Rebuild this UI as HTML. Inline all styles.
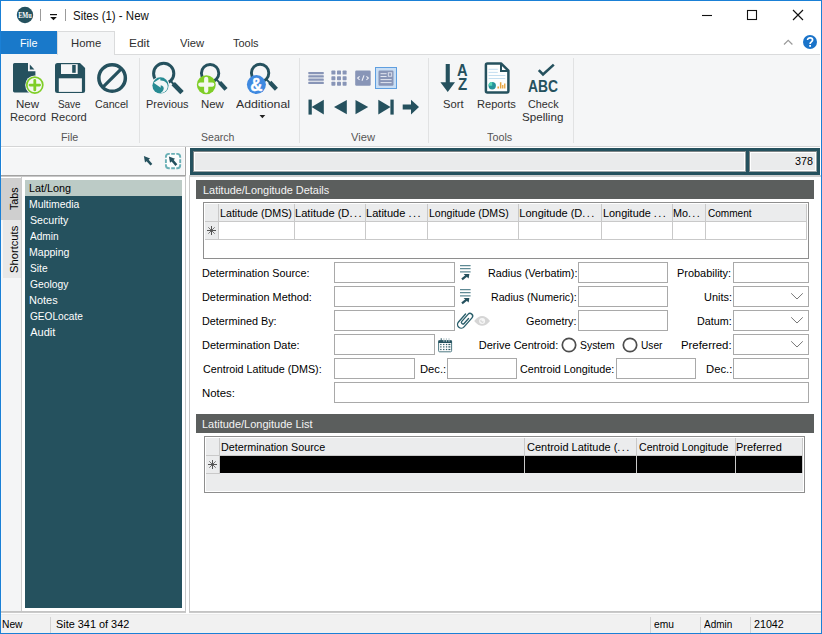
<!DOCTYPE html>
<html><head><meta charset="utf-8"><title>Sites (1) - New</title>
<style>
html,body{margin:0;padding:0;}
body{width:822px;height:634px;overflow:hidden;background:#fff;font-family:"Liberation Sans", sans-serif;position:relative;}
#w{position:absolute;left:0;top:0;width:822px;height:634px;overflow:hidden;background:#fff;}
#w div,#w svg{position:absolute;box-sizing:border-box;}
#w span.t{position:absolute;white-space:nowrap;transform-origin:0 0;display:block;}
</style></head><body><div id="w">
<div style="left:0px;top:0px;width:822px;height:31px;background:#fff;"></div>
<svg style="left:15px;top:5px" width="20" height="20" viewBox="0 0 20 20">
<circle cx="10" cy="10" r="8.2" fill="#25515e"/>
<text x="10" y="12.7" font-family='"Liberation Serif", serif' font-size="7.6" font-weight="bold" fill="#fff" text-anchor="middle" textLength="13.6" lengthAdjust="spacingAndGlyphs">EMu</text>
</svg>
<div style="left:40px;top:9px;width:1px;height:12px;background:#9b9b9b;"></div>
<div style="left:65px;top:9px;width:1px;height:12px;background:#9b9b9b;"></div>
<svg style="left:49px;top:12px" width="10" height="10" viewBox="0 0 10 10">
<rect x="1" y="2" width="7" height="1.2" fill="#111"/>
<path d="M1.2 5 L7.8 5 L4.5 8.3 Z" fill="#111"/></svg>
<svg style="left:695px;top:5px" width="120" height="22" viewBox="0 0 120 22">
<path d="M7 10.5 H17" stroke="#111" stroke-width="1.1" fill="none"/>
<rect x="52.5" y="5.5" width="9" height="9" stroke="#111" stroke-width="1.1" fill="none"/>
<path d="M98 5 L108 15 M108 5 L98 15" stroke="#111" stroke-width="1.15" fill="none"/>
</svg>
<svg style="left:780px;top:33px" width="40" height="20" viewBox="0 0 40 20">
<path d="M4 11.5 L8.2 7.3 L12.4 11.5" stroke="#9a9a9a" stroke-width="1.2" fill="none"/>
<circle cx="30" cy="9" r="7" fill="#1a73c9"/>
<path d="M27.6 6.9 C27.6 4.2 32.6 4.2 32.6 7 C32.6 8.8 30.1 8.9 30.1 10.9" stroke="#fff" stroke-width="1.7" fill="none"/>
<rect x="29.2" y="12" width="1.8" height="1.8" fill="#fff"/>
</svg>
<div style="left:1px;top:54px;width:57px;height:1px;background:#f5f6f7;"></div>
<div style="left:1px;top:31px;width:56px;height:23px;background:#1979ca;"></div>
<div style="left:57px;top:31px;width:58px;height:24px;background:#f5f6f7;border:1px solid #dadbdc;border-bottom:none;"></div>
<div style="left:115px;top:54px;width:705px;height:1px;background:#dadbdc;"></div>
<div style="left:1px;top:55px;width:819px;height:91px;background:#f5f6f7;"></div>
<div style="left:1px;top:146px;width:819px;height:1px;background:#d4d5d6;"></div>
<div style="left:139px;top:58px;width:1px;height:85px;background:#e1e2e3;"></div>
<div style="left:299px;top:58px;width:1px;height:85px;background:#e1e2e3;"></div>
<div style="left:428px;top:58px;width:1px;height:85px;background:#e1e2e3;"></div>
<div style="left:573px;top:58px;width:1px;height:85px;background:#e1e2e3;"></div>
<svg style="left:0;top:0" width="822" height="130" viewBox="0 0 822 130"><path d="M14.5 63 H28 V71.2 H35.4 V91 Q35.4 92.4 34 92.4 H14.5 Q13 92.4 13 91 V64.5 Q13 63 14.5 63 Z" fill="#25515e"/><path d="M29.8 64.6 L34.4 69.6 H29.8 Z" fill="#25515e"/><circle cx="34.8" cy="85.1" r="9.6" fill="#f5f6f7"/><circle cx="34.8" cy="85.1" r="8" fill="#f4f8f0" stroke="#7fce27" stroke-width="1.7"/><path d="M30 85.1 H39.6 M34.8 80.3 V89.9" stroke="#7fce27" stroke-width="2.8" stroke-linecap="round" fill="none"/><path d="M57.5 63 H80 L85.1 68 V90.4 Q85.1 92.9 82.6 92.9 H57.5 Q55 92.9 55 90.4 V65.5 Q55 63 57.5 63 Z" fill="#25515e"/><rect x="61" y="64.2" width="16.7" height="9.8" fill="#f5f6f7"/><rect x="72.2" y="65" width="3.5" height="7.8" fill="#25515e"/><rect x="58.8" y="78.3" width="23.1" height="13.6" fill="#f5f6f7"/><circle cx="112.1" cy="78" r="13.25" fill="none" stroke="#25515e" stroke-width="3.5"/><path d="M103.2 86.9 L121 69.1" stroke="#25515e" stroke-width="3.2" fill="none"/><circle cx="163.7" cy="73.4" r="10.1" fill="none" stroke="#25515e" stroke-width="3"/><path d="M170.5 80.6 L174 84.6" stroke="#25515e" stroke-width="2.2" fill="none"/><path d="M173.2 83.6 L182 92.6" stroke="#25515e" stroke-width="4.8" fill="none"/><circle cx="160.5" cy="85.4" r="9" fill="#f5f6f7"/><circle cx="160.5" cy="85.4" r="8.1" fill="#278b93"/><path d="M153.6 82.7 L160.2 78.5 L160.4 80.5 C165 80.2 167.9 83.4 167.7 86.7 C167.5 90 164.8 92.8 160.4 93.3 C163.3 91.5 164.5 88.7 163.3 86.8 C162.5 85.6 161.5 85.3 160.6 85.4 L160.8 87.8 Z" fill="#f1f7f7"/><circle cx="210.1" cy="73.2" r="8.7" fill="none" stroke="#25515e" stroke-width="2.9"/><path d="M216.6 79.6 L220.2 83.4" stroke="#25515e" stroke-width="2" fill="none"/><path d="M219.6 82.4 L226 89.4" stroke="#25515e" stroke-width="4.2" fill="none"/><circle cx="206.3" cy="84.7" r="9.45" fill="#7fce27"/><path d="M200.3 84.6 H212.3 M206.2 78.8 V90.8" stroke="#f4f8f0" stroke-width="4.2" stroke-linecap="round" fill="none"/><circle cx="260.1" cy="73" r="8.7" fill="none" stroke="#25515e" stroke-width="2.9"/><path d="M266.4 79.4 L270.4 83.4" stroke="#25515e" stroke-width="2" fill="none"/><path d="M269.8 82.2 L276.4 89.2" stroke="#25515e" stroke-width="4.2" fill="none"/><circle cx="256.4" cy="84.6" r="9.5" fill="#3f89e0"/><text x="256.3" y="90.6" font-family='"Liberation Sans", sans-serif' font-size="18" font-weight="bold" fill="#fff" stroke="#fff" stroke-width="0.4" text-anchor="middle" textLength="12.2" lengthAdjust="spacingAndGlyphs">&amp;</text><path d="M259.5 115 H265.3 L262.4 118.2 Z" fill="#222"/><rect x="308.3" y="71.9" width="15.5" height="2.3" rx="0.6" fill="#8895b7"/><rect x="308.3" y="75.2" width="15.5" height="2.3" rx="0.6" fill="#8895b7"/><rect x="308.3" y="78.5" width="15.5" height="2.3" rx="0.6" fill="#8895b7"/><rect x="308.3" y="81.8" width="15.5" height="2.3" rx="0.6" fill="#8895b7"/><rect x="331.4" y="70.6" width="4" height="4" rx="0.7" fill="#8895b7"/><rect x="337.0" y="70.6" width="4" height="4" rx="0.7" fill="#8895b7"/><rect x="342.6" y="70.6" width="4" height="4" rx="0.7" fill="#8895b7"/><rect x="331.4" y="76.2" width="4" height="4" rx="0.7" fill="#8895b7"/><rect x="337.0" y="76.2" width="4" height="4" rx="0.7" fill="#8895b7"/><rect x="342.6" y="76.2" width="4" height="4" rx="0.7" fill="#8895b7"/><rect x="331.4" y="81.8" width="4" height="4" rx="0.7" fill="#8895b7"/><rect x="337.0" y="81.8" width="4" height="4" rx="0.7" fill="#8895b7"/><rect x="342.6" y="81.8" width="4" height="4" rx="0.7" fill="#8895b7"/><rect x="355.2" y="70.5" width="15.5" height="15.2" rx="1.2" fill="#8895b7"/><path d="M359.6 76.3 L357.6 78.1 L359.6 79.9 M366.4 76.3 L368.4 78.1 L366.4 79.9 M364 75.4 L362 80.8" stroke="#eef0f6" stroke-width="1.1" fill="none"/><rect x="375.5" y="67.5" width="21" height="21" fill="#c9def4" stroke="#5f9fe0" stroke-width="1"/><rect x="378.5" y="70.5" width="15" height="15.2" rx="1.2" fill="#8895b7"/><path d="M380.5 73.7 H386.6 M380.5 76.5 H386.6 M380.5 79.6 H391.6 M380.5 82.6 H391.6" stroke="#e3e7f1" stroke-width="1" fill="none"/><rect x="388.3" y="72.8" width="3.4" height="3.4" fill="none" stroke="#e3e7f1" stroke-width="0.9"/><rect x="308.5" y="99.6" width="3.3" height="15" fill="#25515e"/><path d="M311.6 107.1 L323.8 99.8 V114.4 Z" fill="#25515e"/><path d="M334 107.1 L346.8 100 V114.2 Z" fill="#25515e"/><path d="M368.2 107.1 L355.5 100 V114.2 Z" fill="#25515e"/><rect x="390.4" y="99.6" width="3.3" height="15" fill="#25515e"/><path d="M390.6 107.1 L378.3 99.8 V114.4 Z" fill="#25515e"/><path d="M402.7 104.6 H411 V99.8 L419 107.1 L411 114.4 V109.6 H402.7 Z" fill="#25515e"/><path d="M445.7 64 H449.8 V82.2 H455 L447.75 92 L440.4 82.2 H445.7 Z" fill="#25515e"/><text x="462.2" y="75.5" font-family='"Liberation Sans", sans-serif' font-size="15.6" font-weight="bold" fill="#25515e" text-anchor="middle" textLength="10.6" lengthAdjust="spacingAndGlyphs">A</text><text x="462.7" y="89.6" font-family='"Liberation Sans", sans-serif' font-size="16" font-weight="bold" fill="#25515e" text-anchor="middle" textLength="9.2" lengthAdjust="spacingAndGlyphs">Z</text><path d="M487.4 63.4 H501 L508.4 70.6 V91 Q508.4 92.5 506.9 92.5 H487.4 Q485.9 92.5 485.9 91 V64.9 Q485.9 63.4 487.4 63.4 Z" fill="#fdfefe" stroke="#25515e" stroke-width="2.5" stroke-linejoin="round"/><path d="M501 63.6 V71 H508.2" fill="none" stroke="#25515e" stroke-width="2"/><path d="M488.6 69.3 H497.8 M488.6 72.4 H497.8 M488.6 75.5 H505.3 M488.6 78.5 H505.3" stroke="#c4def0" stroke-width="1" fill="none"/><circle cx="492.2" cy="85.7" r="3.7" fill="#26939a"/><path d="M492.2 85.7 V82 A3.7 3.7 0 0 0 488.5 85.7 Z" fill="#57d6b6"/><path d="M497.4 88.4 V86.6 H499 V88.4 Z M499.9 88.4 V82.2 H501.4 V88.4 Z M502.1 88.4 V85 H503.4 V88.4 Z M504.1 88.4 V83.6 H505.4 V88.4 Z" fill="#e6a23c"/><path d="M538.8 70.2 L543 74.4 L553.8 64.6" stroke="#25515e" stroke-width="2.6" fill="none"/><text x="528" y="92" font-family='"Liberation Sans", sans-serif' font-size="15.9" font-weight="bold" fill="#25515e" textLength="30" lengthAdjust="spacingAndGlyphs">ABC</text></svg>
<div style="left:1px;top:147px;width:820px;height:1px;background:#fff;"></div>
<div style="left:2px;top:148px;width:184px;height:27px;background:#f5f6f7;"></div>
<div style="left:1px;top:175px;width:185px;height:1px;background:#a2a2a2;"></div>
<div style="left:185px;top:147px;width:1px;height:29px;background:#a8a8a8;"></div>
<div style="left:184px;top:148px;width:1px;height:27px;background:#fbfbfb;"></div>
<div style="left:186px;top:147px;width:4px;height:470px;background:#fff;"></div>
<div style="left:190px;top:148px;width:630px;height:27px;background:#25515e;"></div>
<div style="left:193px;top:151px;width:553px;height:21px;background:#fff;border:1px solid #7d8587;border-bottom-color:#9aa3a5;border-right-color:#9aa3a5;"></div>
<div style="left:195px;top:153px;width:549px;height:17px;background:#eaebec;"></div>
<div style="left:749px;top:151px;width:68px;height:21px;background:#fff;border:1px solid #7d8587;border-bottom-color:#9aa3a5;border-right-color:#9aa3a5;"></div>
<div style="left:751px;top:153px;width:64px;height:17px;background:#eaebec;"></div>
<div style="left:1px;top:176px;width:20px;height:437px;background:#f5f8fb;"></div>
<div style="left:2px;top:176px;width:19px;height:437px;background:#f4f5f6;"></div>
<div style="left:1px;top:177px;width:20px;height:1px;background:#fff;"></div>
<div style="left:1px;top:178px;width:20px;height:42px;background:#cfcfcf;"></div>
<div style="left:3px;top:220px;width:18px;height:58px;background:#e8e8e8;"></div>
<div style="left:21px;top:176px;width:165px;height:436px;background:#fff;"></div>
<div style="left:21px;top:177px;width:1px;height:434px;background:#cbcbcb;"></div>
<div style="left:1px;top:176px;width:185px;height:1px;background:#c8c8c8;"></div>
<div style="left:185px;top:176px;width:1px;height:436px;background:#c8c8c8;"></div>
<div style="left:25px;top:180px;width:157px;height:428px;background:#25515e;"></div>
<div style="left:25px;top:180px;width:157px;height:16px;background:#bccbc6;"></div>
<span style="position:absolute;left:9px;top:210px;font-size:11px;line-height:11px;color:#000;white-space:nowrap;transform-origin:0 0;transform:rotate(-90deg) scaleX(0.975);">Tabs</span>
<span style="position:absolute;left:9px;top:273px;font-size:11px;line-height:11px;color:#000;white-space:nowrap;transform-origin:0 0;transform:rotate(-90deg) scaleX(1.017);">Shortcuts</span>
<div style="left:189px;top:175px;width:632px;height:2px;background:#d0d0d0;"></div>
<div style="left:190px;top:177px;width:631px;height:434px;background:#fff;"></div>
<div style="left:189px;top:176px;width:1px;height:436px;background:#c8c8c8;"></div>
<div style="left:196px;top:180px;width:618px;height:19px;background:#5b5e5d;"></div>
<div style="left:203px;top:202px;width:606px;height:57px;background:#fff;border:1px solid #8e8e8e;"></div>
<div style="left:205px;top:204px;width:602px;height:17px;background:#ebeced;"></div>
<div style="left:205px;top:221px;width:602px;height:1px;background:#c9c9c9;"></div>
<div style="left:205px;top:239px;width:602px;height:1px;background:#c9c9c9;"></div>
<div style="left:205px;top:222px;width:13px;height:17px;background:#ebeced;"></div>
<div style="left:218px;top:204px;width:1px;height:36px;background:#c9c9c9;"></div>
<div style="left:294px;top:204px;width:1px;height:36px;background:#c9c9c9;"></div>
<div style="left:365px;top:204px;width:1px;height:36px;background:#c9c9c9;"></div>
<div style="left:427px;top:204px;width:1px;height:36px;background:#c9c9c9;"></div>
<div style="left:518px;top:204px;width:1px;height:36px;background:#c9c9c9;"></div>
<div style="left:601px;top:204px;width:1px;height:36px;background:#c9c9c9;"></div>
<div style="left:672px;top:204px;width:1px;height:36px;background:#c9c9c9;"></div>
<div style="left:705px;top:204px;width:1px;height:36px;background:#c9c9c9;"></div>
<div style="left:806px;top:204px;width:1px;height:36px;background:#c9c9c9;"></div>
<svg style="left:207px;top:226px" width="9" height="9" viewBox="0 0 9 9"><path d="M0 4.5 H9 M4.5 0 V9" stroke="#555" stroke-width="1" fill="none"/><path d="M1.3 1.3 L7.7 7.7 M7.7 1.3 L1.3 7.7" stroke="#666" stroke-width="0.9" fill="none"/><rect x="3.5" y="3.5" width="2" height="2" fill="#555"/></svg>
<div style="left:334px;top:262px;width:121px;height:21px;background:#fff;border:1px solid #a9a9a9;"></div>
<div style="left:334px;top:286px;width:121px;height:21px;background:#fff;border:1px solid #a9a9a9;"></div>
<div style="left:334px;top:310px;width:121px;height:21px;background:#fff;border:1px solid #a9a9a9;"></div>
<div style="left:334px;top:334px;width:101px;height:21px;background:#fff;border:1px solid #a9a9a9;"></div>
<div style="left:334px;top:358px;width:81px;height:21px;background:#fff;border:1px solid #a9a9a9;"></div>
<div style="left:334px;top:382px;width:475px;height:21px;background:#fff;border:1px solid #a9a9a9;"></div>
<div style="left:578px;top:262px;width:90px;height:21px;background:#fff;border:1px solid #a9a9a9;"></div>
<div style="left:578px;top:286px;width:90px;height:21px;background:#fff;border:1px solid #a9a9a9;"></div>
<div style="left:578px;top:310px;width:90px;height:21px;background:#fff;border:1px solid #a9a9a9;"></div>
<div style="left:733px;top:262px;width:76px;height:21px;background:#fff;border:1px solid #a9a9a9;"></div>
<div style="left:733px;top:286px;width:76px;height:21px;background:#fff;border:1px solid #a9a9a9;"></div>
<svg style="left:790px;top:292px" width="14" height="9" viewBox="0 0 14 9"><path d="M1.2 1.3 L7 7 L12.8 1.3" stroke="#777" stroke-width="1" fill="none"/></svg>
<div style="left:733px;top:310px;width:76px;height:21px;background:#fff;border:1px solid #a9a9a9;"></div>
<svg style="left:790px;top:316px" width="14" height="9" viewBox="0 0 14 9"><path d="M1.2 1.3 L7 7 L12.8 1.3" stroke="#777" stroke-width="1" fill="none"/></svg>
<div style="left:733px;top:334px;width:76px;height:21px;background:#fff;border:1px solid #a9a9a9;"></div>
<svg style="left:790px;top:340px" width="14" height="9" viewBox="0 0 14 9"><path d="M1.2 1.3 L7 7 L12.8 1.3" stroke="#777" stroke-width="1" fill="none"/></svg>
<div style="left:733px;top:358px;width:76px;height:21px;background:#fff;border:1px solid #a9a9a9;"></div>
<svg style="left:559.6px;top:336.4px" width="18" height="18" viewBox="0 0 18 18"><circle cx="9" cy="9" r="6.7" fill="#fff" stroke="#4d4d4d" stroke-width="1.7"/></svg>
<svg style="left:620.9px;top:336.4px" width="18" height="18" viewBox="0 0 18 18"><circle cx="9" cy="9" r="6.7" fill="#fff" stroke="#4d4d4d" stroke-width="1.7"/></svg>
<div style="left:447px;top:358px;width:70px;height:21px;background:#fff;border:1px solid #a9a9a9;"></div>
<div style="left:616px;top:358px;width:80px;height:21px;background:#fff;border:1px solid #a9a9a9;"></div>
<div style="left:196px;top:414px;width:618px;height:19px;background:#5b5e5d;"></div>
<div style="left:204px;top:436px;width:601px;height:57px;background:#fff;border:1px solid #8e8e8e;"></div>
<div style="left:206px;top:438px;width:597px;height:53px;background:#ebeced;"></div>
<div style="left:206px;top:455px;width:597px;height:1px;background:#c9c9c9;"></div>
<div style="left:220px;top:456px;width:582px;height:17px;background:#000;"></div>
<div style="left:206px;top:473px;width:14px;height:1px;background:#c9c9c9;"></div>
<div style="left:219px;top:438px;width:1px;height:35px;background:#c9c9c9;"></div>
<div style="left:524px;top:438px;width:1px;height:35px;background:#c9c9c9;"></div>
<div style="left:636px;top:438px;width:1px;height:35px;background:#c9c9c9;"></div>
<div style="left:735px;top:438px;width:1px;height:35px;background:#c9c9c9;"></div>
<div style="left:802px;top:438px;width:1px;height:35px;background:#c9c9c9;"></div>
<svg style="left:208px;top:460px" width="9" height="9" viewBox="0 0 9 9"><path d="M0 4.5 H9 M4.5 0 V9" stroke="#555" stroke-width="1" fill="none"/><path d="M1.3 1.3 L7.7 7.7 M7.7 1.3 L1.3 7.7" stroke="#666" stroke-width="0.9" fill="none"/><rect x="3.5" y="3.5" width="2" height="2" fill="#555"/></svg>
<svg style="left:140px;top:150px" width="46" height="24" viewBox="0 0 46 24">
<path d="M3.9 6.1 L5.0 12.399999999999999 L10.1 8.399999999999999 Z" fill="#25515e"/><path d="M7.3 10.1 L11.4 14.799999999999999" stroke="#25515e" stroke-width="2.5" fill="none"/>
<rect x="25.9" y="3.9" width="14.3" height="14.3" rx="3" fill="#fdfefe"/>
<path d="M25.9 7.800000000000001 V6.9 Q25.9 3.9 28.9 3.9 H29.799999999999997 M36.300000000000004 3.9 H37.2 Q40.2 3.9 40.2 6.9 V7.800000000000001 M40.2 14.299999999999999 V15.2 Q40.2 18.2 37.2 18.2 H36.300000000000004 M29.799999999999997 18.2 H28.9 Q25.9 18.2 25.9 15.2 V14.299999999999999 M31.199999999999996 3.9 H34.9 M31.199999999999996 18.2 H34.9 M25.9 9.2 V12.899999999999999 M40.2 9.2 V12.899999999999999" fill="none" stroke="#6ab0b6" stroke-width="1.9"/>
<path d="M28.9 6.4 L30.0 12.7 L35.1 8.7 Z" fill="#25515e"/><path d="M32.3 10.4 L36.4 15.1" stroke="#25515e" stroke-width="2.5" fill="none"/>
</svg>
<svg style="left:458px;top:263px" width="16" height="18" viewBox="0 0 16 18"><path d="M2 2.6 H12.6 M2 5.7 H12.6 M2 8.9 H12.6" stroke="#5f8a95" stroke-width="1.2" fill="none"/><path d="M4 16.3 L8.6 12.7" stroke="#25515e" stroke-width="2.3" fill="none"/><path d="M5.6 11 H11.4 L10.6 15.4 Z" fill="#25515e"/></svg>
<svg style="left:458px;top:287px" width="16" height="18" viewBox="0 0 16 18"><path d="M2 2.6 H12.6 M2 5.7 H12.6 M2 8.9 H12.6" stroke="#5f8a95" stroke-width="1.2" fill="none"/><path d="M4 16.3 L8.6 12.7" stroke="#25515e" stroke-width="2.3" fill="none"/><path d="M5.6 11 H11.4 L10.6 15.4 Z" fill="#25515e"/></svg>
<svg style="left:456px;top:311px" width="36" height="20" viewBox="0 0 36 20">
<g transform="translate(8.9 9.3) rotate(41.3)" fill="none" stroke="#2a5f6b" stroke-width="1.35" stroke-linecap="round">
<path d="M-3.7 -5.2 V5.5 A3.7 3.7 0 0 0 3.7 5.5 V-6.5 A2.65 2.65 0 0 0 -1.6 -6.5 V2.9 A1.55 1.55 0 0 0 1.5 2.9 V-3.8"/></g>
<path d="M18.2 9.9 Q26.1 0.1 34 9.9 Q26.1 19.7 18.2 9.9 Z" fill="#d5d5d5"/>
<circle cx="26.1" cy="10" r="3" fill="#f6f6f6"/><path d="M25.4 8.4 A1.7 1.7 0 1 0 27.8 10.6 H25.4 Z" fill="#cfcfcf"/>
</svg>
<svg style="left:438px;top:338px" width="15" height="15" viewBox="0 0 15 15"><rect x="0.6" y="2.6" width="13" height="11.2" rx="1" fill="#fdfdfd" stroke="#4f7a84" stroke-width="1"/><rect x="0.4" y="2.4" width="13.4" height="2.6" fill="#25515e"/><rect x="2.7" y="0.2" width="1" height="3.6" fill="#2d5864"/><rect x="5.4" y="0.2" width="1" height="3.6" fill="#b5c6ca"/><rect x="7.9" y="0.2" width="1" height="3.6" fill="#b5c6ca"/><rect x="10.5" y="0.2" width="1" height="3.6" fill="#b5c6ca"/><rect x="2.1999999999999997" y="5.9" width="1.3" height="1.2" fill="#2d5864"/><rect x="5.1000000000000005" y="5.9" width="1.3" height="1.2" fill="#2d5864"/><rect x="7.9" y="5.9" width="1.3" height="1.2" fill="#2d5864"/><rect x="10.4" y="5.9" width="2" height="1.2" fill="#2d5864"/><rect x="2.1999999999999997" y="8.3" width="1.3" height="1.2" fill="#2d5864"/><rect x="5.1000000000000005" y="8.3" width="1.3" height="1.2" fill="#2d5864"/><rect x="7.9" y="8.3" width="1.3" height="1.2" fill="#2d5864"/><rect x="10.4" y="8.3" width="2" height="1.2" fill="#2d5864"/><rect x="2.1999999999999997" y="10.9" width="1.3" height="1.2" fill="#2d5864"/><rect x="5.1000000000000005" y="10.9" width="1.3" height="1.2" fill="#2d5864"/><rect x="7.9" y="10.9" width="1.3" height="1.2" fill="#2d5864"/><rect x="10.4" y="10.9" width="2" height="1.2" fill="#2d5864"/></svg>
<div style="left:1px;top:611px;width:820px;height:1px;background:#c4c4c4;"></div>
<div style="left:1px;top:612px;width:820px;height:1px;background:#cacaca;"></div>
<div style="left:186px;top:611px;width:3px;height:2px;background:#fff;"></div>
<div style="left:1px;top:613px;width:820px;height:1px;background:#fdfdfd;"></div>
<div style="left:1px;top:614px;width:820px;height:1px;background:#ebebeb;"></div>
<div style="left:1px;top:615px;width:820px;height:18px;background:#f1f1f1;"></div>
<div style="left:50px;top:617px;width:1px;height:16px;background:#d2d2d2;"></div>
<div style="left:650px;top:617px;width:1px;height:16px;background:#d2d2d2;"></div>
<div style="left:700px;top:617px;width:1px;height:16px;background:#d2d2d2;"></div>
<div style="left:750px;top:617px;width:1px;height:16px;background:#d2d2d2;"></div>
<div style="left:0px;top:0px;width:822px;height:1px;background:#1a80d6;"></div>
<div style="left:0px;top:633px;width:822px;height:1px;background:#1a80d6;"></div>
<div style="left:0px;top:0px;width:1px;height:634px;background:#1a80d6;"></div>
<div style="left:821px;top:0px;width:1px;height:634px;background:#1a80d6;"></div>
<span class="t" id="t0" style="left:73.10px;top:10px;font-size:12px;line-height:12px;color:#111;transform:scaleX(0.9550);">Sites (1) - New</span>
<span class="t" id="t1" style="left:19.82px;top:38px;font-size:11px;line-height:11px;color:#fff;transform:scaleX(0.9824);">File</span>
<span class="t" id="t2" style="left:70.67px;top:38px;font-size:11px;line-height:11px;color:#2f2f2f;transform:scaleX(1.0286);">Home</span>
<span class="t" id="t3" style="left:129.32px;top:38px;font-size:11px;line-height:11px;color:#2f2f2f;transform:scaleX(1.0833);">Edit</span>
<span class="t" id="t4" style="left:179.50px;top:38px;font-size:11px;line-height:11px;color:#2f2f2f;transform:scaleX(1.0208);">View</span>
<span class="t" id="t5" style="left:233.00px;top:38px;font-size:11px;line-height:11px;color:#2f2f2f;transform:scaleX(0.9962);">Tools</span>
<span class="t" id="t6" style="left:15.65px;top:99px;font-size:11px;line-height:11px;color:#2f2f2f;transform:scaleX(1.0476);">New</span>
<span class="t" id="t7" style="left:9.59px;top:112px;font-size:11px;line-height:11px;color:#2f2f2f;transform:scaleX(1.0118);">Record</span>
<span class="t" id="t8" style="left:58.30px;top:99px;font-size:11px;line-height:11px;color:#2f2f2f;transform:scaleX(0.9000);">Save</span>
<span class="t" id="t9" style="left:51.39px;top:112px;font-size:11px;line-height:11px;color:#2f2f2f;transform:scaleX(1.0088);">Record</span>
<span class="t" id="t10" style="left:94.50px;top:99px;font-size:11px;line-height:11px;color:#2f2f2f;transform:scaleX(0.9706);">Cancel</span>
<span class="t" id="t11" style="left:145.80px;top:99px;font-size:11px;line-height:11px;color:#2f2f2f;transform:scaleX(0.9952);">Previous</span>
<span class="t" id="t12" style="left:200.76px;top:99px;font-size:11px;line-height:11px;color:#2f2f2f;transform:scaleX(1.0381);">New</span>
<span class="t" id="t13" style="left:235.80px;top:99px;font-size:11px;line-height:11px;color:#2f2f2f;transform:scaleX(1.1167);">Additional</span>
<span class="t" id="t14" style="left:443.10px;top:99px;font-size:11px;line-height:11px;color:#2f2f2f;transform:scaleX(1.0200);">Sort</span>
<span class="t" id="t15" style="left:477.49px;top:99px;font-size:11px;line-height:11px;color:#2f2f2f;transform:scaleX(1.0079);">Reports</span>
<span class="t" id="t16" style="left:527.50px;top:99px;font-size:11px;line-height:11px;color:#2f2f2f;transform:scaleX(0.9806);">Check</span>
<span class="t" id="t17" style="left:522.30px;top:112px;font-size:11px;line-height:11px;color:#2f2f2f;transform:scaleX(1.0564);">Spelling</span>
<span class="t" id="t18" style="left:60.72px;top:132px;font-size:11px;line-height:11px;color:#555555;transform:scaleX(0.9765);">File</span>
<span class="t" id="t19" style="left:201.40px;top:132px;font-size:11px;line-height:11px;color:#555555;transform:scaleX(0.9571);">Search</span>
<span class="t" id="t20" style="left:350.50px;top:132px;font-size:11px;line-height:11px;color:#555555;transform:scaleX(1.0167);">View</span>
<span class="t" id="t21" style="left:487.00px;top:132px;font-size:11px;line-height:11px;color:#555555;transform:scaleX(0.9808);">Tools</span>
<span class="t" id="t22" style="left:795.00px;top:156px;font-size:11px;line-height:11px;color:#000;transform:scaleX(0.9778);">378</span>
<span class="t" id="t23" style="left:29.22px;top:183px;font-size:11px;line-height:11px;color:#000;transform:scaleX(0.9833);">Lat/Long</span>
<span class="t" id="t24" style="left:29.25px;top:199px;font-size:11px;line-height:11px;color:#fff;transform:scaleX(0.9462);">Multimedia</span>
<span class="t" id="t25" style="left:30.20px;top:215px;font-size:11px;line-height:11px;color:#fff;transform:scaleX(0.9650);">Security</span>
<span class="t" id="t26" style="left:30.20px;top:231px;font-size:11px;line-height:11px;color:#fff;transform:scaleX(0.9161);">Admin</span>
<span class="t" id="t27" style="left:29.24px;top:247px;font-size:11px;line-height:11px;color:#fff;transform:scaleX(0.9585);">Mapping</span>
<span class="t" id="t28" style="left:30.20px;top:263px;font-size:11px;line-height:11px;color:#fff;transform:scaleX(0.9263);">Site</span>
<span class="t" id="t29" style="left:30.20px;top:279px;font-size:11px;line-height:11px;color:#fff;transform:scaleX(0.9341);">Geology</span>
<span class="t" id="t30" style="left:29.20px;top:295px;font-size:11px;line-height:11px;color:#fff;transform:scaleX(0.9964);">Notes</span>
<span class="t" id="t31" style="left:30.20px;top:311px;font-size:11px;line-height:11px;color:#fff;transform:scaleX(0.9193);">GEOLocate</span>
<span class="t" id="t32" style="left:30.20px;top:327px;font-size:11px;line-height:11px;color:#fff;">Audit</span>
<span class="t" id="t33" style="left:202.51px;top:185px;font-size:11px;line-height:11px;color:#f4f4f4;transform:scaleX(0.9921);">Latitude/Longitude Details</span>
<span class="t" id="t34" style="left:219.63px;top:208px;font-size:11px;line-height:11px;color:#000;transform:scaleX(0.9712);">Latitude (DMS)</span>
<span class="t" id="t35" style="left:295.39px;top:208px;font-size:11px;line-height:11px;color:#000;transform:scaleX(1.0109);">Latitude (D<span style="letter-spacing:1.4px">..</span>.</span>
<span class="t" id="t36" style="left:366.49px;top:208px;font-size:11px;line-height:11px;color:#000;transform:scaleX(1.0057);">Latitude <span style="letter-spacing:1.4px">..</span>.</span>
<span class="t" id="t37" style="left:428.64px;top:208px;font-size:11px;line-height:11px;color:#000;transform:scaleX(0.9585);">Longitude (DMS)</span>
<span class="t" id="t38" style="left:519.30px;top:208px;font-size:11px;line-height:11px;color:#000;">Longitude (D<span style="letter-spacing:1.4px">..</span>.</span>
<span class="t" id="t39" style="left:602.51px;top:208px;font-size:11px;line-height:11px;color:#000;transform:scaleX(0.9887);">Longitude <span style="letter-spacing:1.4px">..</span>.</span>
<span class="t" id="t40" style="left:673.42px;top:208px;font-size:11px;line-height:11px;color:#000;transform:scaleX(0.9808);">Mo<span style="letter-spacing:1.4px">..</span>.</span>
<span class="t" id="t41" style="left:707.90px;top:208px;font-size:11px;line-height:11px;color:#000;transform:scaleX(0.9146);">Comment</span>
<span class="t" id="t42" style="left:201.82px;top:268px;font-size:11px;line-height:11px;color:#000;transform:scaleX(0.9815);">Determination Source:</span>
<span class="t" id="t43" style="left:201.81px;top:292px;font-size:11px;line-height:11px;color:#000;transform:scaleX(0.9873);">Determination Method:</span>
<span class="t" id="t44" style="left:201.82px;top:316px;font-size:11px;line-height:11px;color:#000;transform:scaleX(0.9838);">Determined By:</span>
<span class="t" id="t45" style="left:201.80px;top:340px;font-size:11px;line-height:11px;color:#000;transform:scaleX(0.9979);">Determination Date:</span>
<span class="t" id="t46" style="left:202.80px;top:364px;font-size:11px;line-height:11px;color:#000;transform:scaleX(0.9752);">Centroid Latitude (DMS):</span>
<span class="t" id="t47" style="left:201.76px;top:388px;font-size:11px;line-height:11px;color:#000;transform:scaleX(1.0367);">Notes:</span>
<span class="t" id="t48" style="left:487.92px;top:268px;font-size:11px;line-height:11px;color:#000;transform:scaleX(0.9820);">Radius (Verbatim):</span>
<span class="t" id="t49" style="left:490.83px;top:292px;font-size:11px;line-height:11px;color:#000;transform:scaleX(0.9667);">Radius (Numeric):</span>
<span class="t" id="t50" style="left:525.70px;top:316px;font-size:11px;line-height:11px;color:#000;transform:scaleX(0.9824);">Geometry:</span>
<span class="t" id="t51" style="left:676.71px;top:268px;font-size:11px;line-height:11px;color:#000;transform:scaleX(0.9943);">Probability:</span>
<span class="t" id="t52" style="left:703.60px;top:292px;font-size:11px;line-height:11px;color:#000;transform:scaleX(0.9926);">Units:</span>
<span class="t" id="t53" style="left:697.02px;top:316px;font-size:11px;line-height:11px;color:#000;transform:scaleX(0.9765);">Datum:</span>
<span class="t" id="t54" style="left:680.77px;top:340px;font-size:11px;line-height:11px;color:#000;transform:scaleX(1.0340);">Preferred:</span>
<span class="t" id="t55" style="left:705.58px;top:364px;font-size:11px;line-height:11px;color:#000;transform:scaleX(1.0250);">Dec.:</span>
<span class="t" id="t56" style="left:478.80px;top:340px;font-size:11px;line-height:11px;color:#000;">Derive Centroid:</span>
<span class="t" id="t57" style="left:579.80px;top:340px;font-size:11px;line-height:11px;color:#000;transform:scaleX(0.9472);">System</span>
<span class="t" id="t58" style="left:640.60px;top:340px;font-size:11px;line-height:11px;color:#000;transform:scaleX(0.9217);">User</span>
<span class="t" id="t59" style="left:419.98px;top:364px;font-size:11px;line-height:11px;color:#000;transform:scaleX(1.0208);">Dec.:</span>
<span class="t" id="t60" style="left:520.00px;top:364px;font-size:11px;line-height:11px;color:#000;transform:scaleX(0.9821);">Centroid Longitude:</span>
<span class="t" id="t61" style="left:202.20px;top:419px;font-size:11px;line-height:11px;color:#f4f4f4;transform:scaleX(0.9982);">Latitude/Longitude List</span>
<span class="t" id="t62" style="left:220.52px;top:442px;font-size:11px;line-height:11px;color:#000;transform:scaleX(0.9790);">Determination Source</span>
<span class="t" id="t63" style="left:527.00px;top:442px;font-size:11px;line-height:11px;color:#000;transform:scaleX(0.9980);">Centroid Latitude (<span style="letter-spacing:1.4px">..</span>.</span>
<span class="t" id="t64" style="left:639.40px;top:442px;font-size:11px;line-height:11px;color:#000;transform:scaleX(0.9602);">Centroid Longitude</span>
<span class="t" id="t65" style="left:736.40px;top:442px;font-size:11px;line-height:11px;color:#000;transform:scaleX(0.9978);">Preferred</span>
<span class="t" id="t66" style="left:1.97px;top:619px;font-size:11px;line-height:11px;color:#000;transform:scaleX(0.9333);">New</span>
<span class="t" id="t67" style="left:56.40px;top:619px;font-size:11px;line-height:11px;color:#000;transform:scaleX(0.9905);">Site 341 of 342</span>
<span class="t" id="t68" style="left:653.60px;top:619px;font-size:11px;line-height:11px;color:#000;transform:scaleX(0.9286);">emu</span>
<span class="t" id="t69" style="left:704.00px;top:619px;font-size:11px;line-height:11px;color:#000;transform:scaleX(0.9032);">Admin</span>
<span class="t" id="t70" style="left:754.10px;top:619px;font-size:11px;line-height:11px;color:#000;transform:scaleX(0.9733);">21042</span>
</div></body></html>
